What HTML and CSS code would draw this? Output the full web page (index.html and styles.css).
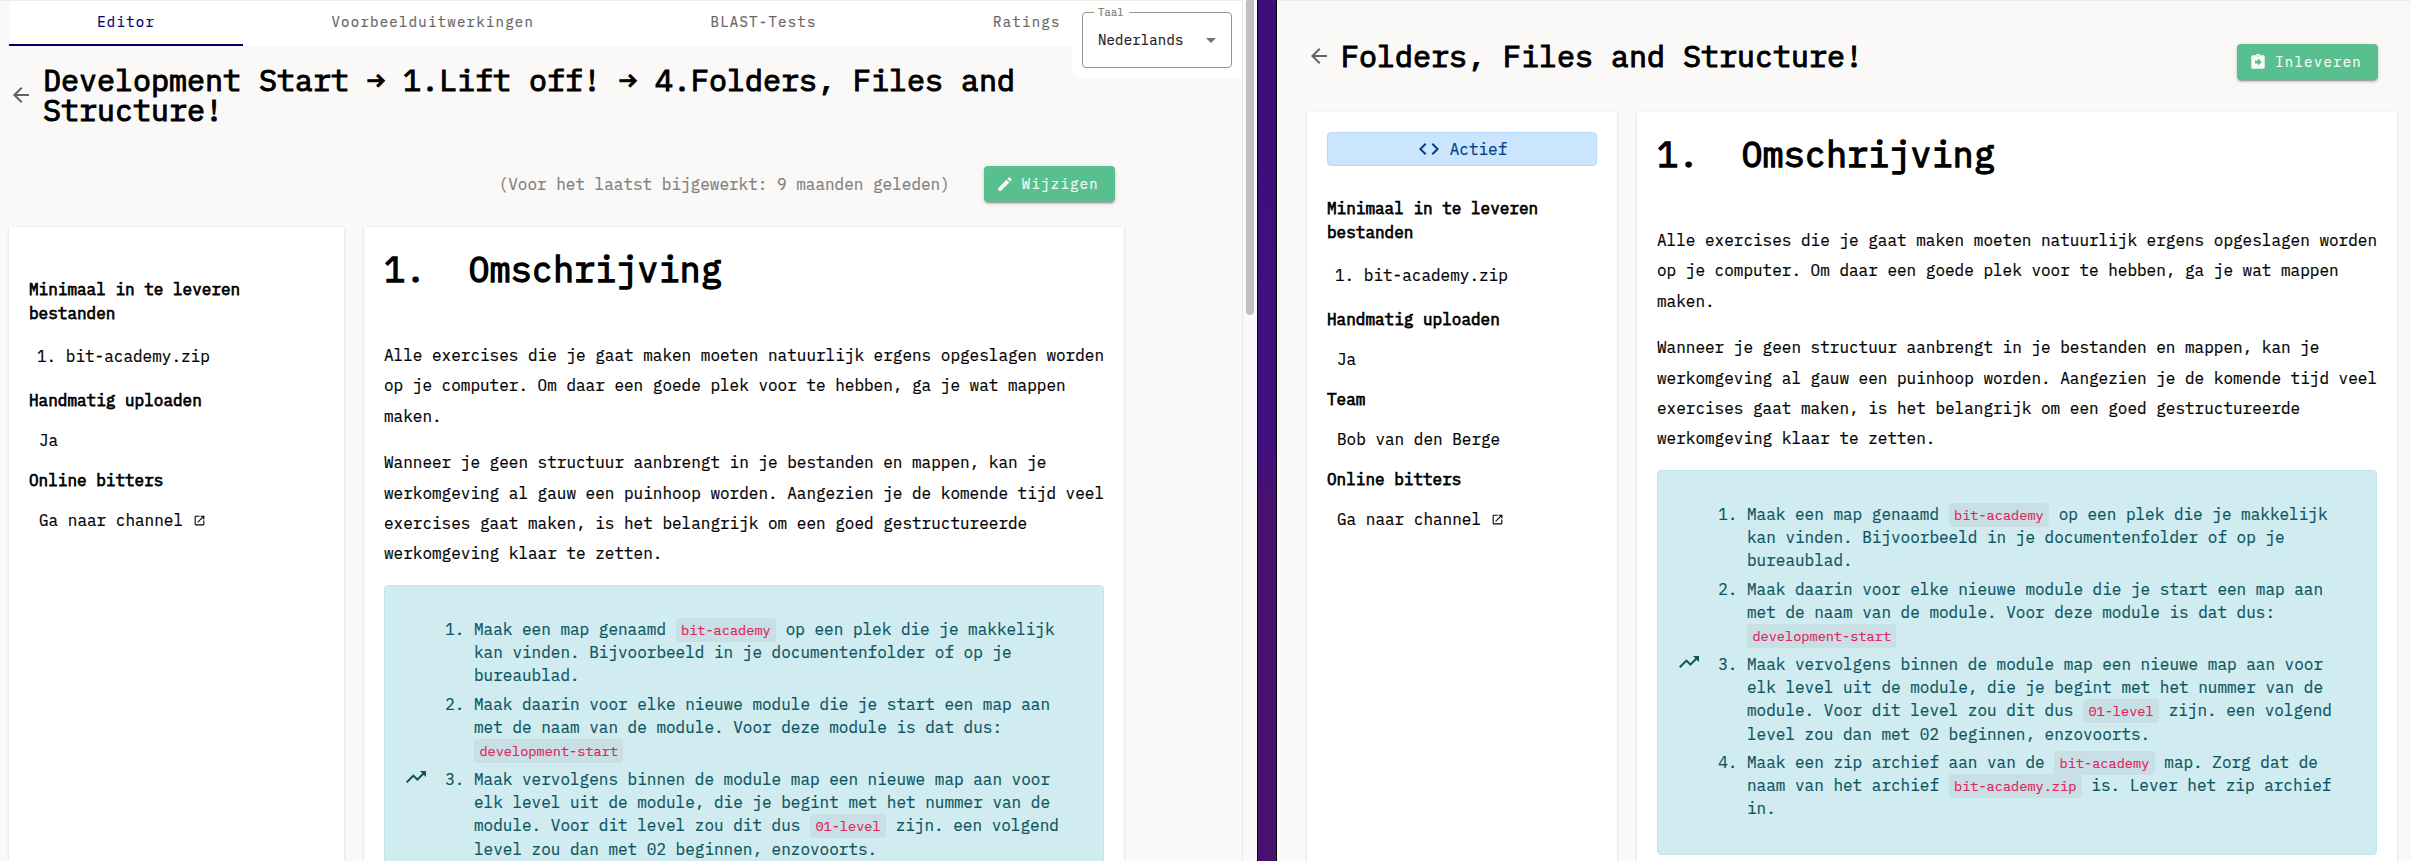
FILE: index.html
```html
<!DOCTYPE html>
<html lang="nl">
<head>
<meta charset="utf-8">
<title>Folders, Files and Structure!</title>
<link rel="stylesheet" href="styles.css">
</head>
<body>
<div class="desktop">
  <main class="pane pane-editor">
    <nav class="tabs">
      <a class="tab active">Editor</a>
      <a class="tab">Voorbeelduitwerkingen</a>
      <a class="tab">BLAST-Tests</a>
      <a class="tab">Ratings</a>
    </nav>
    <div class="language">
      <div class="select">
        <span class="select-label">Taal</span>
        <span>Nederlands</span>
        <svg width="10" height="5" viewBox="0 0 10 5"><path fill="#757575" d="M0 0l5 5 5-5z"/></svg>
      </div>
    </div>
    <header class="title-row">
      <svg class="back" viewBox="0 0 24 24"><path d="M20 11H7.83l5.59-5.59L12 4l-8 8 8 8 1.41-1.41L7.83 13H20v-2z"/></svg>
      <h1 class="title">Development Start → 1.Lift off! → 4.Folders, Files and Structure!</h1>
    </header>
    <div class="actions">
      <span class="updated">(Voor het laatst bijgewerkt: 9 maanden geleden)</span>
      <button class="btn"><svg viewBox="0 0 24 24"><path d="M3 17.25V21h3.75L17.81 9.94l-3.75-3.75L3 17.25zM20.71 7.04a1 1 0 0 0 0-1.41l-2.34-2.34a1 1 0 0 0-1.41 0l-1.83 1.83 3.75 3.75 1.83-1.83z"/></svg>Wijzigen</button>
    </div>
    <div class="columns">
      <aside class="card side">
        <h3>Minimaal in te leveren bestanden</h3>
        <p class="file">1. bit-academy.zip</p>
        <h3>Handmatig uploaden</h3>
        <p>Ja</p>
        <h3>Online bitters</h3>
        <p>Ga naar channel <svg class="ext" viewBox="0 0 24 24"><path d="M19 19H5V5h7V3H5a2 2 0 0 0-2 2v14a2 2 0 0 0 2 2h14a2 2 0 0 0 2-2v-7h-2v7zM14 3v2h3.59l-9.83 9.83 1.41 1.41L19 6.41V10h2V3h-7z"/></svg></p>
      </aside>
      <article class="card content">
        <h2>1.&nbsp; Omschrijving</h2>
        <p>Alle exercises die je gaat maken moeten natuurlijk ergens opgeslagen worden<br>op je computer. Om daar een goede plek voor te hebben, ga je wat mappen<br>maken.</p>
        <p>Wanneer je geen structuur aanbrengt in je bestanden en mappen, kan je<br>werkomgeving al gauw een puinhoop worden. Aangezien je de komende tijd veel<br>exercises gaat maken, is het belangrijk om een goed gestructureerde<br>werkomgeving klaar te zetten.</p>
        <div class="alert">
          <svg class="trend" viewBox="0 0 24 24"><path d="M16 6l2.29 2.29-4.88 4.88-4-4L2 16.59 3.41 18l6-6 4 4 6.3-6.29L22 12V6h-6z"/></svg>
          <ol>
            <li>Maak een map genaamd <code>bit-academy</code> op een plek die je makkelijk<br>kan vinden. Bijvoorbeeld in je documentenfolder of op je<br>bureaublad.</li>
            <li>Maak daarin voor elke nieuwe module die je start een map aan<br>met de naam van de module. Voor deze module is dat dus:<br><code>development-start</code></li>
            <li>Maak vervolgens binnen de module map een nieuwe map aan voor<br>elk level uit de module, die je begint met het nummer van de<br>module. Voor dit level zou dit dus <code>01-level</code> zijn. een volgend<br>level zou dan met 02 beginnen, enzovoorts.</li>
          </ol>
        </div>
      </article>
    </div>
  </main>
  <div class="scrollbar"><div class="thumb"></div></div>
  <div class="gap"></div>
  <main class="pane pane-view">
    <header class="title-row">
      <svg class="back" viewBox="0 0 24 24"><path d="M20 11H7.83l5.59-5.59L12 4l-8 8 8 8 1.41-1.41L7.83 13H20v-2z"/></svg>
      <h1 class="title">Folders, Files and Structure!</h1>
      <button class="btn"><svg viewBox="0 0 24 24"><path fill-rule="evenodd" d="M19 3h-4.18a3 3 0 0 0-5.64 0H5a2 2 0 0 0-2 2v14a2 2 0 0 0 2 2h14a2 2 0 0 0 2-2V5a2 2 0 0 0-2-2zM12 3a1 1 0 1 1 0 2 1 1 0 0 1 0-2zM12 17v-3H8v-4h4V7l5 5-5 5z"/></svg>Inleveren</button>
    </header>
    <div class="columns">
      <aside class="card side">
        <div class="status"><svg viewBox="0 0 24 24"><path d="M9.400 16.600L4.800 12l4.600-4.600L8 6l-6 6 6 6 1.400-1.400zm5.200 0l4.600-4.600-4.600-4.600L16 6l6 6-6 6-1.400-1.400z"/></svg>Actief</div>
        <h3>Minimaal in te leveren bestanden</h3>
        <p class="file">1. bit-academy.zip</p>
        <h3>Handmatig uploaden</h3>
        <p>Ja</p>
        <h3>Team</h3>
        <p>Bob van den Berge</p>
        <h3>Online bitters</h3>
        <p>Ga naar channel <svg class="ext" viewBox="0 0 24 24"><path d="M19 19H5V5h7V3H5a2 2 0 0 0-2 2v14a2 2 0 0 0 2 2h14a2 2 0 0 0 2-2v-7h-2v7zM14 3v2h3.59l-9.83 9.83 1.41 1.41L19 6.41V10h2V3h-7z"/></svg></p>
      </aside>
      <article class="card content">
        <h2>1.&nbsp; Omschrijving</h2>
        <p>Alle exercises die je gaat maken moeten natuurlijk ergens opgeslagen worden<br>op je computer. Om daar een goede plek voor te hebben, ga je wat mappen<br>maken.</p>
        <p>Wanneer je geen structuur aanbrengt in je bestanden en mappen, kan je<br>werkomgeving al gauw een puinhoop worden. Aangezien je de komende tijd veel<br>exercises gaat maken, is het belangrijk om een goed gestructureerde<br>werkomgeving klaar te zetten.</p>
        <div class="alert">
          <svg class="trend" viewBox="0 0 24 24"><path d="M16 6l2.29 2.29-4.88 4.88-4-4L2 16.59 3.41 18l6-6 4 4 6.3-6.29L22 12V6h-6z"/></svg>
          <ol>
            <li>Maak een map genaamd <code>bit-academy</code> op een plek die je makkelijk<br>kan vinden. Bijvoorbeeld in je documentenfolder of op je<br>bureaublad.</li>
            <li>Maak daarin voor elke nieuwe module die je start een map aan<br>met de naam van de module. Voor deze module is dat dus:<br><code>development-start</code></li>
            <li>Maak vervolgens binnen de module map een nieuwe map aan voor<br>elk level uit de module, die je begint met het nummer van de<br>module. Voor dit level zou dit dus <code>01-level</code> zijn. een volgend<br>level zou dan met 02 beginnen, enzovoorts.</li>
            <li>Maak een zip archief aan van de <code>bit-academy</code> map. Zorg dat de<br>naam van het archief <code>bit-academy.zip</code> is. Lever het zip archief<br>in.</li>
          </ol>
        </div>
      </article>
    </div>
  </main>
</div>
</body>
</html>
```
FILE: styles.css
```css
* { box-sizing: border-box; }
body {
  margin: 0;
  background: #faf9f7;
  color: #000;
  font: 16px/24px "IBM Plex Mono", "Liberation Mono", monospace;
  -webkit-text-stroke: 0.2px currentColor;
}
h1, h2, h3, p, ol { margin: 0; padding: 0; }
svg { fill: currentColor; flex: none; }

.desktop { display: flex; width: 2411px; height: 861px; overflow: hidden; }
.pane { position: relative; height: 861px; overflow: hidden; border-top: 1px solid #ececeb; background: #faf9f7; }
.pane-editor { width: 1242px; padding-left: 9px; }
.pane-view { flex: 1; padding-left: 30px; }

.scrollbar { width: 15px; padding-left: 3px; border-left: 1px solid #e8e8e8; background: #fafafa; }
.thumb { width: 8px; height: 315px; border-radius: 0 0 4px 4px; background: #c1c1c1; }
.gap {
  width: 20px;
  border: solid #000;
  border-width: 0 1px;
  background: linear-gradient(#3c0f7a 0%, #40107f 52%, #48116f 58%, #48116f 100%);
}

.tabs { display: flex; height: 45px; background: #fff; }
.tab {
  padding: 0 88.200px;
  color: #666;
  font-size: 14px;
  line-height: 43px;
  letter-spacing: 1.250px;
}
.tab.active { color: #000066; border-bottom: 2px solid #000066; }

.language {
  position: absolute;
  top: 0;
  right: 0;
  width: 170px;
  height: 77px;
  padding: 11px 10px;
  border-bottom-left-radius: 10px;
  background: #fff;
}
.select {
  position: relative;
  display: flex;
  align-items: center;
  justify-content: space-between;
  width: 150px;
  height: 56px;
  padding: 0 15px;
  border: 1px solid #949494;
  border-radius: 4px;
  color: #222;
  font-size: 14px;
  letter-spacing: 0.150px;
}
.select-label {
  position: absolute;
  top: -7px;
  left: 11px;
  padding: 0 5px 0 4px;
  background: #fff;
  color: #777;
  font-size: 10.500px;
  line-height: 13px;
}

.title-row { display: flex; align-items: center; }
.back { width: 24px; height: 24px; margin-right: 10px; color: #606060; }
.title { font-size: 30px; line-height: 30px; font-weight: 400; -webkit-text-stroke: 1.100px #000; }
.pane-editor .title-row { width: 1107px; height: 60px; margin-top: 19px; }
.pane-view .title-row { height: 36px; margin: 43px 33px 0 0; }
.pane-view .title { flex: 1; align-self: flex-start; margin-top: -3px; }
.pane-view .back { align-self: flex-start; }

.actions { display: flex; align-items: center; justify-content: flex-end; width: 1106px; margin-top: 41px; }
.updated { margin-right: 34px; color: #808080; }
.btn {
  display: flex;
  align-items: center;
  height: 36px;
  padding: 0 16px 0 12px;
  border: 0;
  border-radius: 4px;
  background: #58bf8f;
  box-shadow: 0 3px 1px -2px rgba(0,0,0,.2), 0 2px 2px rgba(0,0,0,.14), 0 1px 5px rgba(0,0,0,.12);
  color: #f8f8f8;
  font: 14px/20px "IBM Plex Mono", "Liberation Mono", monospace;
  letter-spacing: 1.250px;
}
.btn svg { width: 18px; height: 18px; margin-right: 8px; }

.columns { display: flex; gap: 20px; }
.pane-editor .columns { margin-top: 25px; }
.pane-view .columns { margin-top: 32px; }
.card {
  height: 760px;
  background: #fff;
  box-shadow: 0 2px 1px -1px rgba(0,0,0,.12), 0 1px 1px rgba(0,0,0,.08), 0 1px 3px rgba(0,0,0,.12);
}
.pane-editor .side { width: 335px; padding: 50px 20px; }
.pane-view .side { width: 310px; padding: 20px; }
.side h3 { font-size: 16px; font-weight: 400; -webkit-text-stroke: 0.750px #000; }
.side p { margin: 16px 0 16px 10px; }
.side .file { margin: 19px 0 20px 8px; }
.ext { width: 13px; height: 13px; vertical-align: -1px; }
.status {
  display: flex;
  align-items: center;
  justify-content: center;
  height: 34px;
  margin-bottom: 30px;
  border: 1px solid #b8daff;
  border-radius: 4px;
  background: #cce5ff;
  color: #004085;
}
.status svg { width: 24px; height: 24px; margin-right: 9px; }

.content { width: 760px; padding: 21px 20px; }
.content h2 { margin-bottom: 50px; font-size: 35.200px; line-height: 42px; font-weight: 400; -webkit-text-stroke: 1.300px #000; white-space: pre; }
.content p { margin-bottom: 16px; line-height: 30.400px; white-space: nowrap; }
.alert {
  display: flex;
  align-items: center;
  height: 385px;
  padding: 0 19px;
  border: 1px solid #bee5eb;
  border-radius: 4px;
  background: #d1ecf1;
  color: #0c5460;
}
.trend { width: 24px; height: 24px; margin-right: 46px; }
.alert ol { align-self: flex-start; padding-top: 32px; line-height: 23.300px; white-space: nowrap; }
.alert li { margin-bottom: 5px; }
code {
  padding: 3px 5.400px;
  border-radius: 3px;
  background: #c8e0e5;
  color: #e0245e;
  font: 13.600px/1 "IBM Plex Mono", "Liberation Mono", monospace;
}
```
